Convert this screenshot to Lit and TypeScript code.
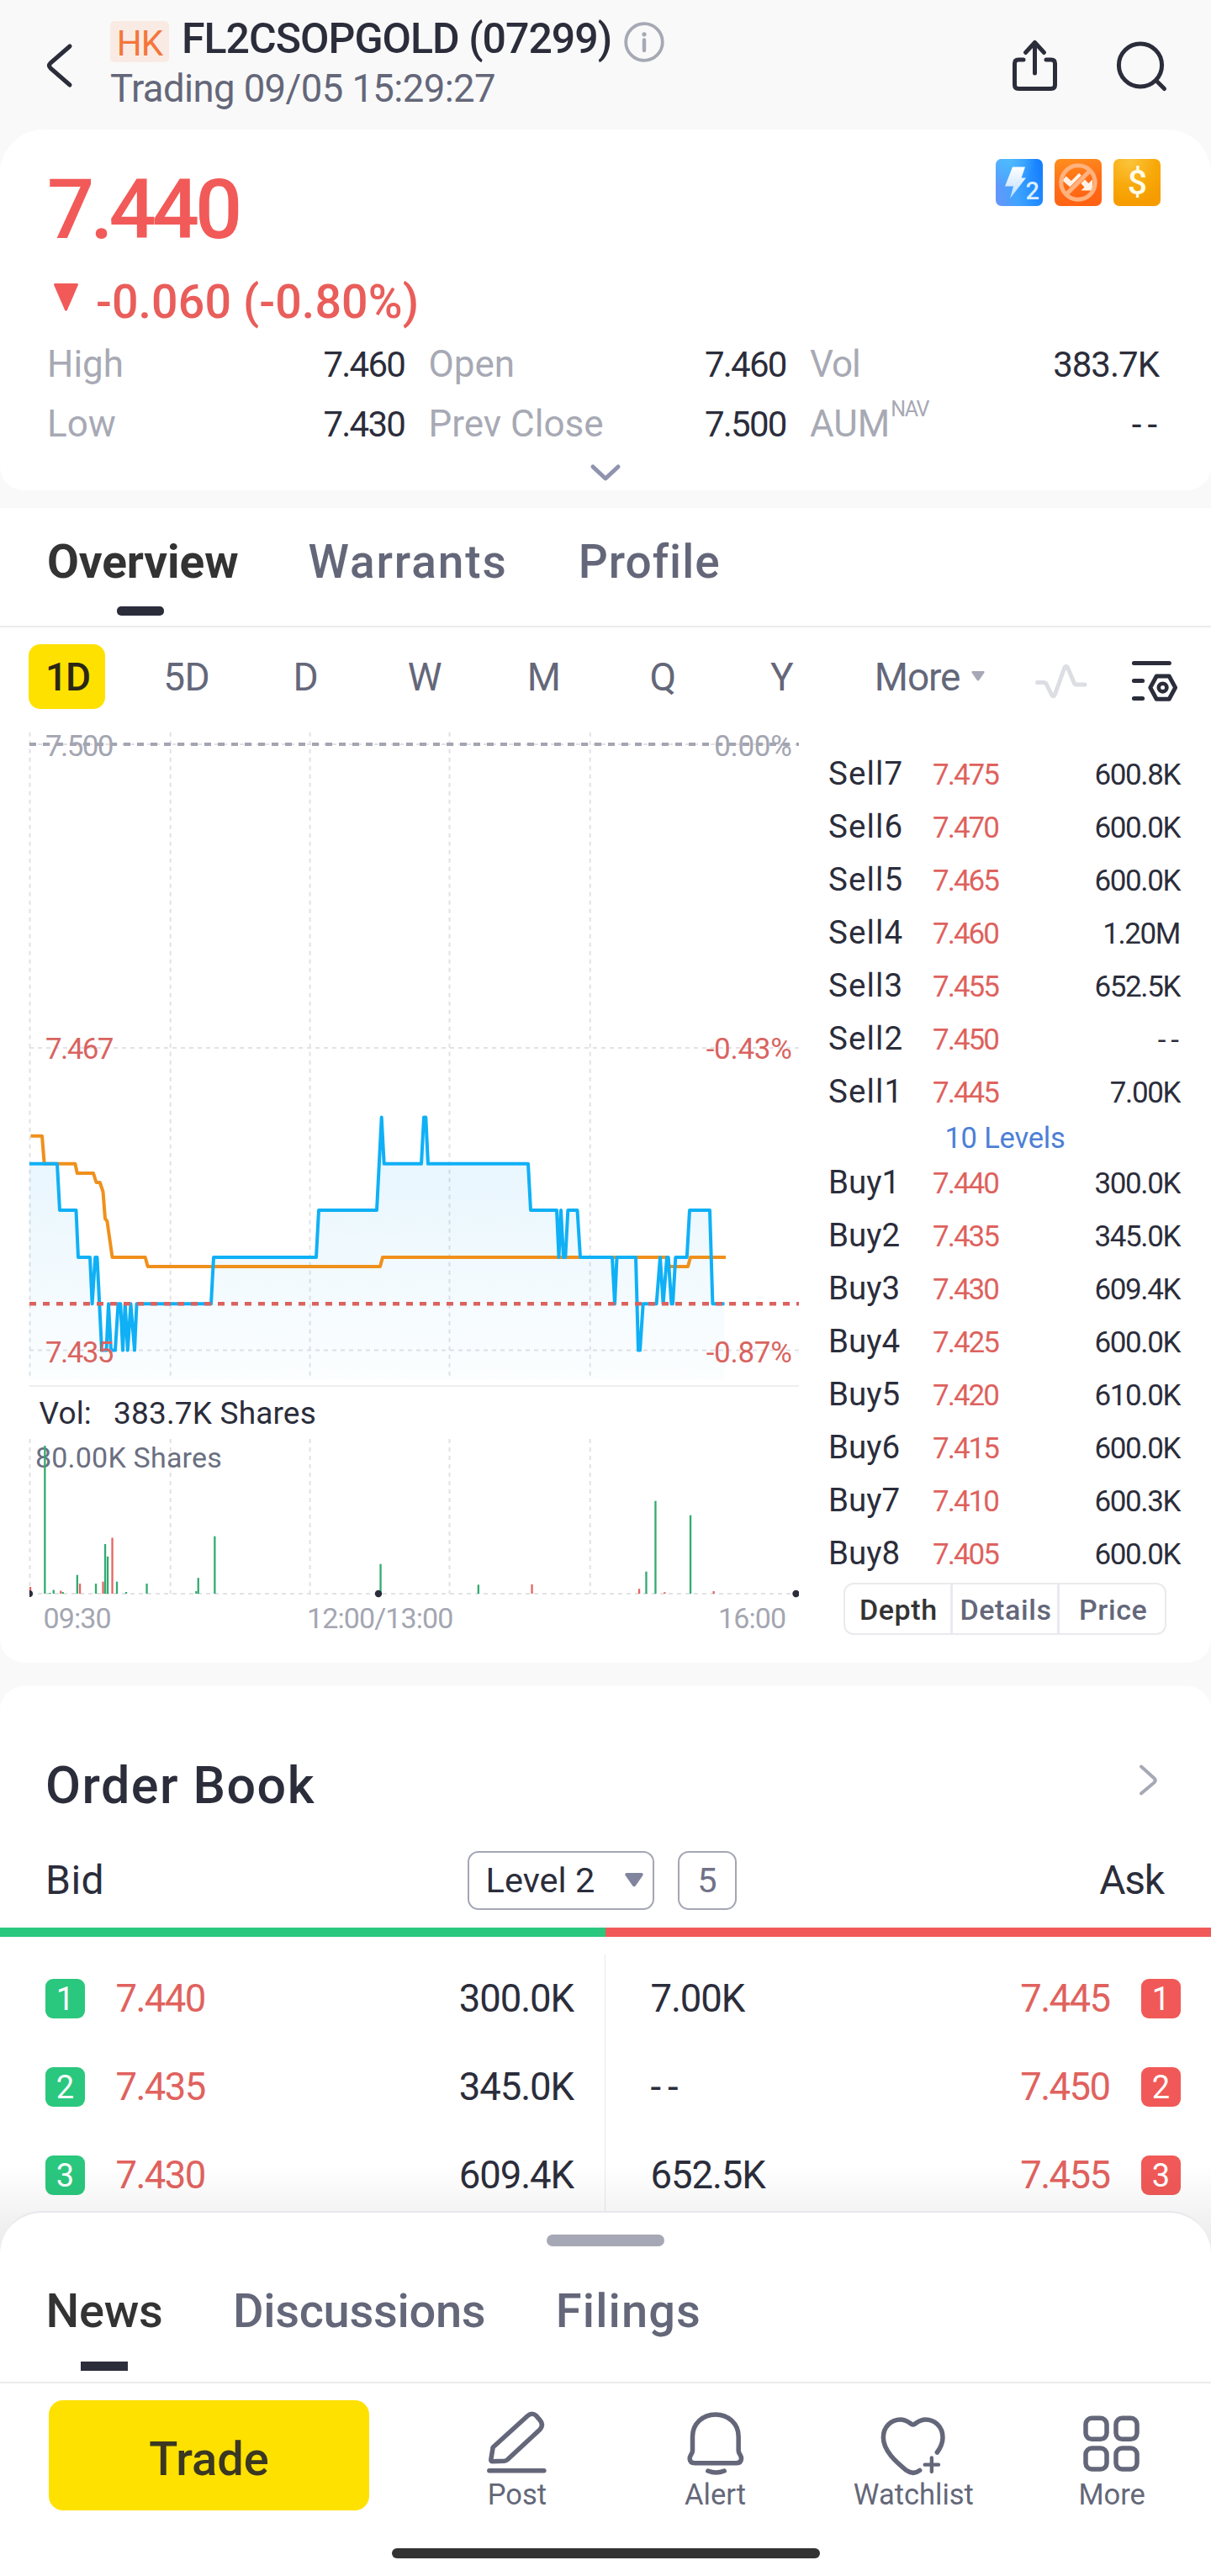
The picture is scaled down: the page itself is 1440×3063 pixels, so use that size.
import { LitElement, html, svg, css, nothing } from "lit";
import { customElement, state } from "lit/decorators.js";
import { classMap } from "lit/directives/class-map.js";

type Level = [label: string, price: string, qty: string];

const SELLS: Level[] = [
  ["Sell7", "7.475", "600.8K"],
  ["Sell6", "7.470", "600.0K"],
  ["Sell5", "7.465", "600.0K"],
  ["Sell4", "7.460", "1.20M"],
  ["Sell3", "7.455", "652.5K"],
  ["Sell2", "7.450", "--"],
  ["Sell1", "7.445", "7.00K"],
];

const BUYS: Level[] = [
  ["Buy1", "7.440", "300.0K"],
  ["Buy2", "7.435", "345.0K"],
  ["Buy3", "7.430", "609.4K"],
  ["Buy4", "7.425", "600.0K"],
  ["Buy5", "7.420", "610.0K"],
  ["Buy6", "7.415", "600.0K"],
  ["Buy7", "7.410", "600.3K"],
  ["Buy8", "7.405", "600.0K"],
];

const BOOK = [
  { n: 1, bid: "7.440", bidQty: "300.0K", askQty: "7.00K", ask: "7.445" },
  { n: 2, bid: "7.435", bidQty: "345.0K", askQty: "--", ask: "7.450" },
  { n: 3, bid: "7.430", bidQty: "609.4K", askQty: "652.5K", ask: "7.455" },
];

// Intraday price polyline: x along the session, y on the price axis.
const PRICE: [number, number][] = [
  [35, 1383.8], [68, 1383.8], [71, 1439], [90.5, 1439], [93, 1495], [107, 1495], [109.6, 1550.3],
  [113.2, 1495], [115.5, 1495], [121, 1605.6], [126.5, 1605.6], [129, 1550.3], [132, 1605.6], [137, 1605.6],
  [140.5, 1550.3], [143.3, 1550.3], [146, 1605.6], [148.8, 1550.3], [151.8, 1605.6], [155.5, 1550.3],
  [160, 1605.6], [162.5, 1550.3], [251, 1550.3], [254, 1495], [376, 1495], [379, 1439], [448, 1439],
  [453.7, 1328.5], [456.7, 1383.8], [501, 1383.8], [504, 1328.5], [506.3, 1328.5], [509, 1383.8],
  [628, 1383.8], [631, 1439], [662, 1439], [664.5, 1495], [667, 1439], [670, 1495], [672.3, 1495],
  [675.3, 1439], [686.5, 1439], [690, 1495], [728, 1495], [731, 1550.3], [733.5, 1495], [756, 1495],
  [759, 1605.6], [761, 1605.6], [764.7, 1550.3], [780.6, 1550.3], [785, 1495], [788.6, 1550.3],
  [793, 1495], [794.7, 1495], [798.4, 1550.3], [800, 1550.3], [803.3, 1495], [816.8, 1495], [820, 1439],
  [844, 1439], [847.4, 1550.3], [861.5, 1550.3],
];

const AVERAGE: [number, number][] = [
  [36.5, 1350.7], [50, 1350.7], [52.7, 1383.8], [89.4, 1383.8], [91.8, 1395], [111, 1395], [114.5, 1406],
  [118.8, 1406], [122.5, 1417], [125, 1449], [127.4, 1452], [133.5, 1495], [172.7, 1495], [175.7, 1506],
  [452, 1506], [455, 1495], [793, 1495], [796, 1506], [818, 1506], [821, 1495], [863, 1495],
];

// Volume bars: x, height, 1 when the tick was up.
const VOLUME: [number, number, 0 | 1][] = [
  [36, 8, 0], [53.3, 176, 1], [59.4, 1, 1], [63.7, 4.5, 1], [72.2, 3.5, 0], [74.7, 2, 1], [91.8, 22.3, 1],
  [95, 12, 0], [114, 12, 1], [122.5, 14.3, 0], [125, 59, 1], [128, 44.2, 1], [133.5, 66.5, 0],
  [139, 14.3, 1], [150, 2, 1], [174.5, 12, 1], [233.3, 3, 1], [235.7, 18.8, 1], [255.3, 68.3, 1],
  [452.5, 35.3, 1], [568.8, 10.7, 1], [632.5, 11.2, 0], [760, 5.8, 0], [768.4, 26.3, 1],
  [779.4, 110.3, 1], [790.4, 1.8, 0], [821, 93.3, 1], [848.6, 3, 0],
];

const GRID_X = [35.5, 202.7, 368.6, 534.5, 701.7];
const line = (p: [number, number][]) => p.map(([x, y]) => `${x},${y}`).join(" ");

@customElement("app-root")
export class AppRoot extends LitElement {
  @state() private period = "1D";
  @state() private panel = "Depth";

  static styles = css`
    :host {
      display: block;
      width: 1440px;
      height: 3063px;
      overflow: hidden;
      background: #f9f9f9;
      color: #2b2d3b;
      font-family: Roboto, "Liberation Sans", sans-serif;
      white-space: nowrap;
    }
    * { box-sizing: border-box; }
    svg { display: block; flex: none; overflow: visible; }

    .header { display: flex; height: 154px; padding: 16px 55px 0 54px; }
    .back { margin-top: 35px; }
    .heading { margin-left: 43px; }
    .title-row { display: flex; align-items: center; height: 60px; }
    .market {
      width: 70px; height: 49px; margin-top: 7px; border-radius: 5px; text-align: center;
      background: #f9ebe4; color: #f4763c; font-size: 42px; line-height: 53px; letter-spacing: -1px;
    }
    .name { margin-left: 15px; font-size: 50px; font-weight: 500; letter-spacing: -0.97px; }
    .info { margin: 7px 0 0 14.5px; }
    .status { font-size: 45.5px; line-height: 60px; letter-spacing: -0.6px; color: #646779; }
    .actions { display: flex; margin-left: auto; gap: 70px; padding-top: 29px; }

    .quote {
      height: 429px; padding: 35px 60px 0 56px; background: #fff;
      border-radius: 52px 52px 28px 28px;
    }
    .quote-top { display: flex; justify-content: space-between; height: 135px; }
    .last { padding-top: 5px; font-size: 99px; line-height: 110px; font-weight: 500; letter-spacing: -5.1px; color: #f15a58; }
    .tags { display: flex; gap: 14px; }
    .change { display: flex; height: 71px; padding-left: 8px; color: #e95d5a; font-size: 55.5px; line-height: 71px; font-weight: 500; letter-spacing: 0.1px; }
    .change svg { margin: 13px 21px 0 0; }
    .stats { display: grid; grid-template-columns: 425px 425px 416px; column-gap: 28.5px; grid-auto-rows: 71px; margin-top: 3px; }
    .stat { display: flex; justify-content: space-between; align-items: center; line-height: 71px; }
    .stat dt { font-size: 44px; color: #a7a9b4; }
    .stat dd { margin: 0; font-size: 42px; letter-spacing: -1.8px; }
    .stat dd.none { letter-spacing: 7px; margin-right: -4px; }
    .stat dd.wide { letter-spacing: -1px; margin-right: 1px; }
    .stat .tight { letter-spacing: -1px; }
    dl { margin: 0; }
    .sup { display: inline-block; font-size: 25px; line-height: 30px; vertical-align: 24px; letter-spacing: -1.6px; margin-left: 1px; }
    .expand { display: flex; justify-content: center; padding-top: 11px; margin-left: 4px; }

    .overview { margin-top: 21px; height: 1372.6px; background: #fff; border-radius: 0 0 28px 28px; }
    .tabs { display: flex; gap: 82px; padding-left: 56px; border-bottom: 2px solid #ebebed; font-size: 55px; font-weight: 500; color: #646779; }
    .tab { display: flex; flex-direction: column; align-items: center; }
    .tab.on { color: #333; }
    .tab.on::after { content: ""; width: 56px; height: 11px; background: #2b2d3b; }
    .top-tabs { height: 142px; padding-top: 11px; gap: 83px; }
    .top-tabs .tab { line-height: 106px; letter-spacing: 1.9px; }
    .top-tabs .tab:last-child { letter-spacing: 1px; margin-left: 1px; }
    .top-tabs .tab.on { font-weight: 700; letter-spacing: -0.1px; }
    .top-tabs .tab.on::after { border-radius: 5px; margin-right: 5px; }

    .periods { display: flex; align-items: center; height: 116px; padding-left: 9.7px; font-size: 46px; color: #646779; }
    .period { display: flex; justify-content: center; width: 141.6px; padding-right: 1px; letter-spacing: -0.7px; line-height: 56px; padding-top: 1.5px; }
    .period.on { padding-top: 0; }
    .period.on span { width: 91px; height: 77px; border-radius: 14px; background: #ffe100; color: #2a2716; font-weight: 500; text-align: center; line-height: 79px; letter-spacing: -2px; }
    .more-period { margin-left: 39px; letter-spacing: -1.1px; padding-top: 1.5px; }
    .caret { margin-left: 14px; }
    .pulse { margin-left: 60px; }
    .gear { margin-left: 50px; }

    .market-view { display: flex; }
    .chart text { font-family: Roboto, sans-serif; font-size: 35px; letter-spacing: -1.6px; }
    .chart .grey { fill: #a4a6b2; }
    .chart .red { fill: #d9645f; }
    .chart .end { text-anchor: end; letter-spacing: -0.3px; }
    .chart .vol { font-size: 37px; fill: #2b2d3b; letter-spacing: 0.17px; }
    .chart .vol-max { font-size: 34px; fill: #6b6f82; letter-spacing: 0.2px; }
    .chart .time { font-size: 34px; fill: #a4a6b2; letter-spacing: -0.9px; }

    .ladder { width: 480px; padding: 26px 37px 0 25px; }
    .rung { display: flex; align-items: baseline; height: 63px; line-height: 63px; font-size: 35px; letter-spacing: -1.4px; }
    .rung .side { width: 124px; font-size: 38.5px; letter-spacing: 0; }
    .rung .sell { letter-spacing: 1.1px; }
    .rung .price { color: #de625e; letter-spacing: -2px; }
    .rung .qty { margin-left: auto; }
    .rung .none { letter-spacing: 6px; margin-right: -5px; }
    .levels { height: 45.3px; padding-top: 1px; text-align: center; font-size: 34.5px; line-height: 46px; letter-spacing: -0.2px; color: #4d7fd6; margin-left: 2px; }
    .switch { display: flex; width: 384px; height: 62px; margin: 4px 0 0 18px; border: 2px solid #eaeaee; border-radius: 12px; }
    .switch span { flex: 1; text-align: center; padding-left: 2px; font-size: 34px; line-height: 61px; font-weight: 500; color: #64677a; letter-spacing: 0.6px; }
    .switch span + span { border-left: 3.5px solid #eaeaee; }
    .switch .on { color: #333; }

    .book { position: relative; height: 680px; margin-top: 28.4px; padding-top: 78px; background: #fff; border-radius: 28px 28px 0 0; }
    .book-head { display: flex; justify-content: space-between; height: 80px; padding: 0 63px 0 54px; font-size: 61px; font-weight: 500; line-height: 80px; letter-spacing: 1.46px; }
    .book-head svg { margin-top: 15px; }
    .book-bar { display: grid; grid-template-columns: 501.6px 320.4px 1fr; align-items: center; height: 70px; margin-top: 38px; padding: 0 56px 0 54px; font-size: 48px; line-height: 58px; }
    .bid-label { padding-top: 1px; letter-spacing: 0.5px; }
    .ask-label { padding-top: 1px; text-align: right; letter-spacing: -1.2px; }
    .pickers { display: flex; justify-content: space-between; }
    .picker { display: flex; align-items: center; height: 70px; border: 2.5px solid #a4a6b4; border-radius: 13px; font-size: 41.5px; }
    .level { width: 222px; justify-content: space-between; padding: 0 11px 0 20px; }
    .count { width: 70px; justify-content: center; color: #6f7288; }
    .ratio { display: flex; height: 11px; margin-top: 21px; background: #f05957; }
    .ratio i { width: 720px; background: #2ac77e; }
    .rows { display: grid; grid-template-columns: 1fr 1fr; padding-top: 21px; font-size: 45.5px; letter-spacing: -1.1px; }
    .half { display: flex; align-items: center; height: 105px; line-height: 54px; }
    .half > span { padding-top: 1px; }
    .bid { padding: 0 37px 0 54px; border-right: 1px solid #e9e9ed; }
    .ask { padding: 0 36px 0 53.5px; }
    .half .price { color: #e0625e; letter-spacing: -1.6px; }
    .bid .price { margin-left: 36.5px; }
    .bid .qty, .ask .price { margin-left: auto; }
    .half .none { letter-spacing: 8px; }
    .half .rank { width: 47px; height: 47px; padding: 0; border-radius: 9px; color: #fff; font-size: 38px; line-height: 49px; text-align: center; letter-spacing: 0; }
    .bid .rank { background: #2ac77e; }
    .ask .rank { background: #f05957; margin-left: 37.5px; }
    .fade { position: absolute; left: 0; right: 0; bottom: 0; height: 110px; background: linear-gradient(rgba(0, 0, 0, 0), rgba(0, 0, 0, 0.09)); }

    .sheet { position: relative; margin-top: -56px; height: 434px; padding-top: 26px; background: #fff; border-top: 2px solid #e7e8ec; border-radius: 50px 50px 0 0; }
    .grip { width: 140px; height: 14px; margin: 0 auto; border-radius: 7px; background: #a6a9b5; }
    .news-tabs { height: 163px; padding: 17px 0 0 54.5px; font-size: 56px; gap: 83.5px; }
    .news-tabs .tab { line-height: 120px; letter-spacing: -0.3px; }
    .news-tabs .tab:last-child { letter-spacing: 1.1px; }
    .dock { display: flex; height: 196px; }
    .trade { width: 381px; height: 131px; margin: 20.5px 58px 0 58px; border-radius: 17px; background: #ffe100; color: #3a3822; font-size: 56px; font-weight: 500; line-height: 140px; text-align: center; }
    .dock-item { display: flex; flex: 1; flex-direction: column; align-items: center; padding-top: 26px; color: #646779; font-size: 34.5px; line-height: 42px; }
    .home { width: 509px; height: 12px; margin: 0 auto; border-radius: 6px; background: #333; }
  `;

  private stat(label: unknown, value: string) {
    const kind = classMap({ none: value === "--", wide: value.endsWith("K") });
    return html`<div class="stat"><dt>${label}</dt><dd class=${kind}>${value}</dd></div>`;
  }

  private header() {
    return html`<header class="header">
      <svg class="back" width="34" height="54" fill="none" stroke="#2b2d3b" stroke-width="5" stroke-linecap="round" stroke-linejoin="round">
        <path d="M29 4 L6 24 Q3 27 6 30 L29 50" />
      </svg>
      <div class="heading">
        <div class="title-row">
          <span class="market">HK</span>
          <span class="name">FL2CSOPGOLD (07299)</span>
          <svg class="info" width="48" height="48" fill="none" stroke="#a6a9b5" stroke-width="3.8" stroke-linecap="round">
            <circle cx="24" cy="24" r="21.8" />
            <path d="M24 21.5V34" stroke-width="4.4" />
            <circle cx="24" cy="14.8" r="2.6" fill="#a6a9b5" stroke="none" />
          </svg>
        </div>
        <div class="status">Trading 09/05 15:29:27</div>
      </div>
      <div class="actions">
        <svg width="54" height="66" fill="none" stroke="#2b2d3b" stroke-width="5" stroke-linecap="round" stroke-linejoin="round">
          <path d="M13 26H7Q2.5 26 2.5 30.5V56Q2.5 60.5 7 60.5H46Q50.5 60.5 50.5 56V30.5Q50.5 26 46 26H40M26.5 42V6M15.5 17.5L26.5 5.5L37.5 17.5" />
        </svg>
        <svg width="57" height="66" fill="none" stroke="#2b2d3b" stroke-width="5" stroke-linecap="round">
          <circle cx="28" cy="32.5" r="25.6" /><path d="M47 51L56.5 60.5" />
        </svg>
      </div>
    </header>`;
  }

  private tags() {
    return html`<div class="tags">
      <svg width="56" height="56">
        <defs>
          <linearGradient id="blue" x1="0" y1="0.6" x2="1" y2="0.4">
            <stop offset="0" stop-color="#6397fb" /><stop offset="0.4" stop-color="#3fa4ff" /><stop offset="1" stop-color="#1580ff" />
          </linearGradient>
          <radialGradient id="sky" cx="0.25" cy="0" r="0.6">
            <stop offset="0" stop-color="#4fbcff" /><stop offset="1" stop-color="#4fbcff" stop-opacity="0" />
          </radialGradient>
          <linearGradient id="bolt" x1="0" y1="0" x2="0" y2="1">
            <stop offset="0" stop-color="#fff" /><stop offset="1" stop-color="#b9dcff" />
          </linearGradient>
        </defs>
        <rect width="56" height="56" rx="7" fill="url(#blue)" />
        <rect width="56" height="56" rx="7" fill="url(#sky)" />
        <path d="M20 9.5H35L30.5 22.5H36L17 47L21 32.5H11Z" fill="url(#bolt)" />
        <text x="35.5" y="48" font-size="29" font-weight="500" fill="#dcefff">2</text>
      </svg>
      <svg width="56" height="56">
        <defs>
          <linearGradient id="orange" x1="0.4" y1="0" x2="0.6" y2="1">
            <stop offset="0" stop-color="#ff8b1c" /><stop offset="0.5" stop-color="#ff6d17" /><stop offset="1" stop-color="#ff6212" />
          </linearGradient>
        </defs>
        <rect width="56" height="56" rx="7" fill="url(#orange)" />
        <path d="M11.500 23L20 30.500L29 21.500L39 32.500" fill="none" stroke="#fff3e8" stroke-width="6.5" />
        <path d="M45 24.5V37.500H31.500Z" fill="#fff3e8" />
        <path d="M13.500 42.500L42.500 13.500" stroke="#ff7424" stroke-width="6.5" />
        <g fill="none" stroke="#ffb27d" stroke-width="5"><circle cx="28" cy="28" r="20.2" /><path d="M13.500 42.500L42.500 13.500" /></g>
      </svg>
      <svg width="56" height="56">
        <defs>
          <radialGradient id="gold" cx="0.35" cy="0.05" r="0.9">
            <stop offset="0" stop-color="#fbc43c" /><stop offset="0.6" stop-color="#f8a90a" /><stop offset="1" stop-color="#f69c00" />
          </radialGradient>
        </defs>
        <rect width="56" height="56" rx="7" fill="url(#gold)" />
        <text x="28.5" y="41.5" font-size="41" font-weight="500" text-anchor="middle" fill="#fffbe8">$</text>
      </svg>
    </div>`;
  }

  private chart() {
    return html`<svg class="chart" width="960" height="1114" viewBox="0 862 960 1114">
      <defs>
        <linearGradient id="area" gradientUnits="userSpaceOnUse" x1="0" y1="1328" x2="0" y2="1640">
          <stop offset="0" stop-color="#0aa0ee" stop-opacity="0.11" />
          <stop offset="1" stop-color="#0aa0ee" stop-opacity="0.015" />
        </linearGradient>
        <clipPath id="plot"><rect x="35" y="862" width="915" height="1114" /></clipPath>
      </defs>
      <g stroke="#e2e2e6" stroke-width="2" stroke-dasharray="5 5">
        ${GRID_X.map((x) => svg`<path d="M${x} 870.7V1640.4M${x} 1711V1895" />`)}
        <path d="M35 885H950M35 1246H950M35 1605.600H950M35 1895H950" />
      </g>
      <path d="M35 1648H950" stroke="#e9e9ec" stroke-width="1.5" />
      <polygon points="${line(PRICE)} 861.5,1640 35,1640" fill="url(#area)" />
      <path d="M35 885H950" stroke="#a3a5b1" stroke-width="4" stroke-dasharray="8 8" />
      <g fill="none" stroke-width="4" stroke-linejoin="round">
        <polyline points=${line(AVERAGE)} stroke="#f0901c" />
        <polyline points=${line(PRICE)} stroke="#0fb0f6" />
      </g>
      <path d="M35 1550.300H950" stroke="#dc625e" stroke-width="4.4" stroke-dasharray="8 8" />
      <text class="grey" x="54" y="899">7.500</text>
      <text class="grey end" x="941.5" y="899">0.00%</text>
      <text class="red" x="54" y="1258.7">7.467</text>
      <text class="red end" x="941.5" y="1258.7">-0.43%</text>
      <text class="red" x="54" y="1619.5">7.435</text>
      <text class="red end" x="941.5" y="1619.5">-0.87%</text>
      <text class="vol" x="46.5" y="1692.7">Vol:</text>
      <text class="vol" x="135" y="1692.7">383.7K Shares</text>
      <text class="vol-max" x="42" y="1745.4">80.00K Shares</text>
      ${VOLUME.map(([x, h, up]) => svg`<rect x=${x - 1.1} y=${1895 - h} width="2.3" height=${h} fill=${up ? "#31ab70" : "#e36662"} />`)}
      <g clip-path="url(#plot)" fill="#2b2d3b">
        <circle cx="35" cy="1895" r="4" /><circle cx="450" cy="1895" r="4.2" /><circle cx="946.5" cy="1895" r="4.2" />
      </g>
      <text class="time" x="51.5" y="1935.5">09:30</text>
      <text class="time" x="365" y="1935.5">12:00/13:00</text>
      <text class="time" x="854" y="1935.5">16:00</text>
    </svg>`;
  }

  private rung([label, price, qty]: Level) {
    return html`<div class="rung">
      <span class=${classMap({ side: true, sell: label.startsWith("S") })}>${label}</span>
      <span class="price">${price}</span>
      <span class=${classMap({ qty: true, none: qty === "--" })}>${qty}</span>
    </div>`;
  }

  private overview() {
    return html`<section class="overview">
      <nav class="tabs top-tabs">
        <span class="tab on">Overview</span><span class="tab">Warrants</span><span class="tab">Profile</span>
      </nav>
      <div class="periods">
        ${["1D", "5D", "D", "W", "M", "Q", "Y"].map(
          (p) => html`<div class=${classMap({ period: true, on: p === this.period })} @click=${() => (this.period = p)}><span>${p}</span></div>`,
        )}
        <span class="more-period">More</span>
        <svg class="caret" width="16" height="12"><path d="M1.5 0H14.5Q16.5 0.5 15 2.5L9.5 10.5Q8 12.5 6.5 10.5L1 2.5Q-0.5 0.5 1.5 0Z" fill="#a6a9b5" /></svg>
        <svg class="pulse" width="62" height="60" fill="none" stroke="#dddee4" stroke-width="5" stroke-linecap="round" stroke-linejoin="round">
          <path d="M2.5 37.5H10Q12 37.5 13 39L19.5 52Q21.5 55.5 23.3 52L34.8 20Q36.7 16.5 38.6 20L46 37.5Q47 40 49 40H59" />
        </svg>
        <svg class="gear" width="60" height="60" fill="none" stroke="#2b2d3b" stroke-width="5" stroke-linecap="round" stroke-linejoin="round">
          <path d="M5.4 14.6H47.4M5.4 35.4H15.6M5.4 56.6H15.6" />
          <path d="M32.2 30H47.2L54.6 43.6L47.2 57.3H32.2L24.8 43.6Z" />
          <circle cx="39.6" cy="43.6" r="4.8" stroke-width="4.6" />
        </svg>
      </div>
      <div class="market-view">
        ${this.chart()}
        <aside class="ladder">
          ${SELLS.map((l) => this.rung(l))}
          <div class="levels">10 Levels</div>
          ${BUYS.map((l) => this.rung(l))}
          <div class="switch">
            ${["Depth", "Details", "Price"].map(
              (p) => html`<span class=${p === this.panel ? "on" : nothing} @click=${() => (this.panel = p)}>${p}</span>`,
            )}
          </div>
        </aside>
      </div>
    </section>`;
  }

  private book() {
    return html`<section class="book">
      <div class="book-head">
        <span>Order Book</span>
        <svg width="24" height="38" fill="none" stroke="#a6a9b5" stroke-width="4" stroke-linecap="round" stroke-linejoin="round">
          <path d="M4 2.5L19.500 16.500Q22 19 19.500 21.500L4 34.500" />
        </svg>
      </div>
      <div class="book-bar">
        <span class="bid-label">Bid</span>
        <div class="pickers">
          <div class="picker level">
            <span>Level 2</span>
            <svg width="22" height="17"><path d="M2 0H20Q23 0.8 21 3.5L13 15Q11 17.5 9 15L1 3.5Q-1 0.8 2 0Z" fill="#81849d" /></svg>
          </div>
          <div class="picker count">5</div>
        </div>
        <span class="ask-label">Ask</span>
      </div>
      <div class="ratio"><i></i></div>
      <div class="rows">
        ${BOOK.map(
          (r) => html`<div class="half bid">
              <span class="rank">${r.n}</span><span class="price">${r.bid}</span><span class="qty">${r.bidQty}</span>
            </div>
            <div class="half ask">
              <span class=${classMap({ none: r.askQty === "--" })}>${r.askQty}</span><span class="price">${r.ask}</span><span class="rank">${r.n}</span>
            </div>`,
        )}
      </div>
      <div class="fade"></div>
    </section>`;
  }

  private dockItem(label: string, box: string, art: unknown) {
    return html`<div class="dock-item">
      <svg width="100" height="85" viewBox=${box} fill="none" stroke="#646779" stroke-width="16.5" stroke-linecap="round" stroke-linejoin="round">${art}</svg>
      <span>${label}</span>
    </div>`;
  }

  render() {
    return html`
      ${this.header()}
      <section class="quote">
        <div class="quote-top"><div class="last">7.440</div>${this.tags()}</div>
        <div class="change">
          <svg width="29" height="33"><path d="M1.5 0H27.5Q29.5 0.3 28.6 2.5L16 31.5Q14.5 34 13 31.5L0.4 2.5Q-0.5 0.3 1.5 0Z" fill="#f15a58" /></svg>
          <span>-0.060 (-0.80%)</span>
        </div>
        <dl class="stats">
          ${this.stat("High", "7.460")} ${this.stat("Open", "7.460")}
          ${this.stat(html`<span class="tight">Vol</span>`, "383.7K")}
          ${this.stat("Low", "7.430")} ${this.stat("Prev Close", "7.500")}
          ${this.stat(html`AUM<span class="sup">NAV</span>`, "--")}
        </dl>
        <div class="expand">
          <svg width="36" height="22" fill="none" stroke="#8f93ad" stroke-width="5" stroke-linecap="round" stroke-linejoin="round"><path d="M3 4L18 18L33 4" /></svg>
        </div>
      </section>
      ${this.overview()} ${this.book()}
      <section class="sheet">
        <div class="grip"></div>
        <nav class="tabs news-tabs">
          <span class="tab on">News</span><span class="tab">Discussions</span><span class="tab">Filings</span>
        </nav>
        <div class="dock">
          <div class="trade">Trade</div>
          ${this.dockItem("Post", "-16.5 0 300 255", svg`<path d="M47 150L170 38Q186 24 201 37L214 52Q230 70 214 87L100 193Q95 198 88 198.500L44 200Q39 200 40 193Z" /><path d="M34 233H229" />`)}
          ${this.dockItem("Alert", "690.5 0 300 255", svg`<path d="M758 162V112C758 65 795 33 840 33S922 65 922 112V162C922 174 933 178 932 191C931 202 925 206 915 206H766C756 206 749 202 748 191C747 178 758 174 758 162Z" /><path d="M813 234Q842 246 871 234" />`)}
          ${this.dockItem("Watchlist", "78 0 300 255", svg`<path d="M313 168C329 147 333 132 333 115C333 76 304 51 272 51C252 51 242 61 233 67Q227 71 221 67C212 61 202 51 182 51C150 51 121 76 121 115C121 163 168 203 203 232Q228 250 251 232" /><path d="M269 212H318M293.500 187V237" stroke-width="13" />`)}
          ${this.dockItem("More", "787 0 300 255", svg`<rect x="844" y="46" width="75" height="75" rx="22" /><rect x="952" y="46" width="75" height="75" rx="22" /><rect x="844" y="153" width="75" height="75" rx="22" /><rect x="952" y="153" width="75" height="75" rx="22" />`)}
        </div>
        <div class="home"></div>
      </section>
    `;
  }
}
